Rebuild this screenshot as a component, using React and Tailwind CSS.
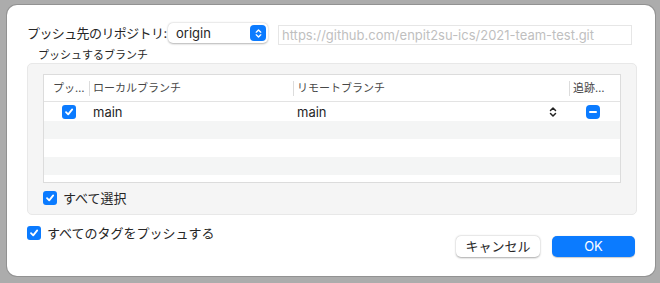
const font = { fontFamily: '"Inter", "Noto Sans CJK JP", sans-serif' };

function CheckBox({ className = "" }) {
  return (
    <span className={`flex h-[14px] w-[14px] shrink-0 items-center justify-center rounded-[3px] bg-[#0b7bff] ${className}`}>
      <svg width="10" height="10" viewBox="0 0 10 10">
        <path d="M2 5.2 L4.2 7.4 L8.2 2.4" fill="none" stroke="white" strokeWidth="1.8" strokeLinecap="round" strokeLinejoin="round" />
      </svg>
    </span>
  );
}

function UpDown({ color = "#222", size = 10 }) {
  return (
    <svg width={size} height={size + 2} viewBox="0 0 10 12">
      <path d="M2.5 4.5 L5 2 L7.5 4.5 M2.5 7.5 L5 10 L7.5 7.5" fill="none" stroke={color} strokeWidth="1.5" strokeLinecap="round" strokeLinejoin="round" />
    </svg>
  );
}

function Row({ gray }) {
  return <div className={`h-[18px] ${gray ? "bg-[#f4f5f5]" : "bg-white"}`} />;
}

export default function App() {
  return (
    <div className="h-[283px] w-[660px] overflow-hidden bg-[#acacac] pl-[7px] pt-[5px]" style={font}>
      <div className="flex h-[271px] w-[648px] flex-col rounded-[10px] bg-white px-[20px] pt-[18px] text-[#262626] shadow-[0_0_0_1px_rgba(0,0,0,0.15)]">
        <div className="flex h-[22px] shrink-0 items-start whitespace-nowrap text-[13px] leading-[20px]">
          <span className="w-[136px] shrink-0 tracking-[-0.6px]">プッシュ先のリポジトリ:</span>
          <div className="ml-[5px] flex h-[20px] w-[100px] shrink-0 items-center justify-between rounded-[5px] bg-white pl-[8px] pr-[2px] shadow-[0_0.5px_2px_rgba(0,0,0,0.3)]">
            <span>origin</span>
            <span className="flex h-[16px] w-[16px] items-center justify-center rounded-[4px] bg-[#0b7bff]">
              <UpDown color="white" size={9} />
            </span>
          </div>
          <div className="ml-[10px] mt-[2px] flex h-[20px] w-[354px] shrink-0 items-center border border-[#e6e6e6] px-[3px] text-[#bfbfbf]">
            https://github.com/enpit2su-ics/2021-team-test.git
          </div>
        </div>

        <div className="mt-[2px] pl-[11px] text-[11px] leading-[16px]">プッシュするブランチ</div>

        <div className="flex h-[152px] w-[610px] shrink-0 flex-col rounded-[5px] border border-[#e8e8e8] bg-[#f5f5f5] px-[15px] pt-[10px]">
          <div className="h-[109px] w-[578px] shrink-0 overflow-hidden border border-[#dcdcdc] bg-white text-[13px] leading-[18px]">
            <div className="flex h-[27px] items-center whitespace-nowrap border-b border-[#e3e3e3] text-[11px] text-[#474747]">
              <span className="w-[45px] pl-[9px]">プッ…</span>
              <span className="h-[15px] w-px bg-[#dcdcdc]" />
              <span className="w-[203px] pl-[3px]">ローカルブランチ</span>
              <span className="h-[15px] w-px bg-[#dcdcdc]" />
              <span className="w-[275px] pl-[3px]">リモートブランチ</span>
              <span className="h-[15px] w-px bg-[#dcdcdc]" />
              <span className="pl-[3px]">追跡…</span>
            </div>
            <div className="flex h-[19px] items-center">
              <span className="flex w-[46px] justify-center pl-[3px]"><CheckBox /></span>
              <span className="w-[204px] pl-[3px]">main</span>
              <span className="flex w-[276px] items-center justify-between pl-[3px] pr-[12px]">
                <span>main</span>
                <UpDown />
              </span>
              <span className="flex flex-1 justify-center pr-[4px]">
                <span className="flex h-[14px] w-[14px] items-center justify-center rounded-[4px] bg-[#0b7bff]">
                  <span className="h-[2px] w-[8px] rounded bg-white" />
                </span>
              </span>
            </div>
            <Row gray />
            <Row />
            <Row gray />
            <Row />
          </div>
          <div className="mt-[8px] flex h-[14px] items-center text-[13px] leading-[14px]">
            <CheckBox />
            <span className="ml-[6px]">すべて選択</span>
          </div>
        </div>

        <div className="flex items-start justify-between">
          <div className="mt-[11px] flex h-[14px] items-center text-[13px] leading-[14px]">
            <CheckBox />
            <span className="ml-[6px]">すべてのタグをプッシュする</span>
          </div>
          <div className="mt-[21px] flex gap-[12px] text-[13px] leading-[21px]">
            <button className="h-[21px] w-[84px] rounded-[5px] bg-white shadow-[0_0.5px_2px_rgba(0,0,0,0.35)]">キャンセル</button>
            <button className="h-[21px] w-[83px] rounded-[5px] bg-[#0b7bff] text-white shadow-[0_0.5px_1px_rgba(0,0,0,0.2)]">OK</button>
          </div>
        </div>
      </div>
    </div>
  );
}
